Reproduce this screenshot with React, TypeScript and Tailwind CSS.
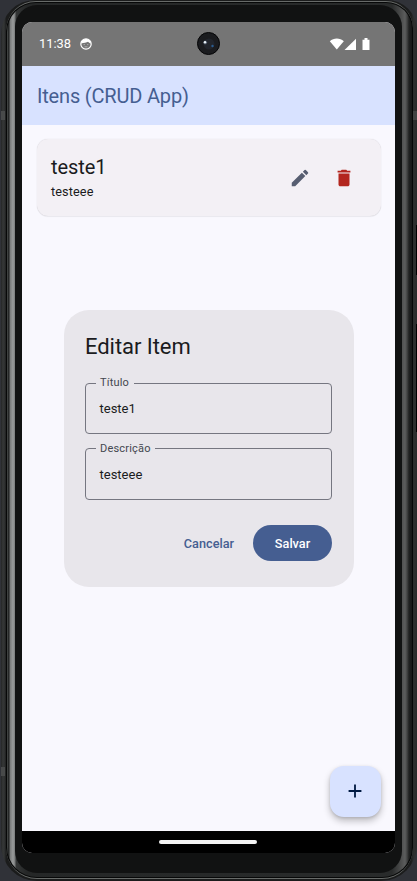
import type { ReactNode } from "react";

function StatusBar() {
  return (
    <div className="grid h-11 shrink-0 grid-cols-[1fr_23px_1fr] items-center bg-[#757575] pb-px text-white">
      <div className="flex items-center gap-2 pt-px pl-[17px]">
        <span className="w-[33px] pt-px text-[12.900px] leading-none whitespace-nowrap">11:38</span>
        <svg className="size-3" viewBox="0 0 12 12">
          <circle cx="6" cy="6" r="5.200" fill="none" stroke="#fff" strokeWidth="1.200" />
          <path d="M1 5.500C1.500 2 3.600 1 6 1s4.500 1 5 4.500C9.500 5.300 8.800 4.700 8 3.800 6.500 4.800 4 4.800 1 5.500Z" fill="#fff" />
          <path d="M3.600 6.600h1.300M7.100 6.600h1.300M4.500 8.800h3" stroke="#fff" strokeWidth=".7" opacity=".6" />
        </svg>
      </div>
      <div className="flex size-[23px] items-center justify-center rounded-full border-[1.5px] border-[#050506] bg-[#1b1c1f]">
        <svg className="size-5" viewBox="0 0 20 20">
          <circle cx="10" cy="10" r="5.500" fill="#22252c" />
          <circle cx="6.200" cy="8.400" r="2" fill="#46505f" />
          <circle cx="6" cy="8.300" r="1.200" fill="#edf5fa" />
          <circle cx="13.500" cy="12" r="1.200" fill="#2b5c91" />
        </svg>
      </div>
      <div className="flex justify-end pt-px pr-[25px]">
        <svg className="h-3 w-[41px]" viewBox="0 0 41 12" fill="#fff">
          <path d="M.8 3.200C4.600-.3 11-.3 14.800 3.200L7.800 11.500Z" />
          <path d="M15.500 12 27 .7V12Z" />
          <path d="M33.500 1.800h2V0h3v1.800h2V12h-7Z" />
        </svg>
      </div>
    </div>
  );
}

function Field({ label, value }: { label: string; value: string }) {
  return (
    <fieldset className="h-[58px] w-full rounded-[4px] border border-[#757680] px-[9.500px]">
      <legend className="h-[14px] px-[4.500px] text-[11px] leading-[14px] tracking-[0.200px] text-[#44464f]">{label}</legend>
      <div className="pt-[9px] pl-[4px] text-[13px] leading-[20px] text-[#1a1b20]">{value}</div>
    </fieldset>
  );
}

function ItemCard() {
  return (
    <div className="flex h-[77px] items-center rounded-[11px] bg-[#f3f0f5] pt-px pr-[25.500px] pl-[14.500px] shadow-[0_0_1px_rgba(0,0,0,0.18),0_1px_1px_rgba(0,0,0,0.05)]">
      <div className="flex-1 text-[#1a1b20]">
        <div className="text-[20px] leading-[25px] tracking-[-0.050px]">teste1</div>
        <div className="mt-[3px] text-[12.700px] leading-[18px] tracking-[0.100px]">testeee</div>
      </div>
      <div className="flex gap-[22px]">
        <svg className="size-[22px]" viewBox="0 0 24 24" fill="#575e71">
          <path d="M3 17.250V21h3.750L17.810 9.940l-3.750-3.750L3 17.250zM20.710 7.040a1 1 0 0 0 0-1.410l-2.340-2.340a1 1 0 0 0-1.410 0l-1.830 1.830 3.750 3.750 1.830-1.830z" />
        </svg>
        <svg className="size-[22px]" viewBox="0 0 24 24" fill="#b3261e">
          <path d="M6 19c0 1.100.9 2 2 2h8c1.100 0 2-.9 2-2V7H6v12zM19 4h-3.500l-1-1h-5l-1 1H5v2h14V4z" />
        </svg>
      </div>
    </div>
  );
}

function EditDialog() {
  return (
    <section className="flex h-[276.500px] w-[290px] flex-col rounded-[25px] bg-[#e8e6eb] px-[21.500px] pt-[21px]">
      <h2 className="h-[45px] text-[22px] leading-[31px] tracking-[-0.050px] text-[#1a1b20]">Editar Item</h2>
      <div className="flex flex-col gap-[7.500px]">
        <Field label="Título" value="teste1" />
        <Field label="Descrição" value="testeee" />
      </div>
      <div className="flex justify-end gap-[19px] pt-[25.500px] text-[12.700px] font-medium">
        <button className="text-[#455e91]">Cancelar</button>
        <button className="h-[36px] w-[79px] rounded-full bg-[#455e91] text-white">Salvar</button>
      </div>
    </section>
  );
}

function PhoneFrame({ children }: { children: ReactNode }) {
  return (
    <div className="relative h-[881px] w-[417px] overflow-hidden bg-[#303238] pl-px">
      <div className="h-[881px] rounded-[34px_30px_36px_36px] bg-[linear-gradient(90deg,#242626_0px,#363838_2px,#2c2e2e_4px,#1b1c1c_5px,#1b1c1c_410px,#303131_413px,#292a2a_100%)] p-[1px_4px_2px_5px]">
        <div className="h-full rounded-[30px_27px_31px_31px] border-y border-[#686b69] bg-[#070808] p-[1px_1px_1px]">
          <div className="h-full rounded-[29px_26px_30px_30px] bg-[linear-gradient(90deg,#4b4e4d_0px,#191b1b_2px,#777979_3px,#999b9b_6px,#777979_8px,#343636_9px,#252727_20px,#292b2b_385px,#484949_393px,#5c5d5d_398px,#434444_400px,#202121_402px,#171818_100%)] p-[2px_10px_4px_8px]">
            <div className="h-full rounded-[22px] bg-[#111212] p-[17px_0_0_7px]">
              <div className="relative flex h-[831px] w-[373px] flex-col overflow-hidden rounded-[10px] bg-[#f9f8fe]">{children}</div>
            </div>
          </div>
        </div>
      </div>
      <div className="absolute inset-0 flex justify-between pl-px">
        <div className="flex flex-col gap-[647px] pt-[111px]">
          <div className="h-[9px] w-1 bg-[#484a4a]" />
          <div className="h-[9px] w-1 bg-[#484a4a]" />
        </div>
        <div className="flex flex-col items-end pt-[111px]">
          <div className="h-[9px] w-1 bg-[#424343]" />
          <div className="flex flex-col gap-[49px] pt-[105px]">
            <div className="h-[50px] w-px bg-black" />
            <div className="h-[108px] w-px bg-black" />
          </div>
        </div>
      </div>
    </div>
  );
}

export default function App() {
  return (
    <div className="font-[Roboto,sans-serif]">
      <PhoneFrame>
        <StatusBar />
        <header className="flex h-[58.500px] shrink-0 items-center bg-[#d8e2ff] pt-px pl-[15px] text-[20px] tracking-[-0.180px] text-[#455e91]">Itens (CRUD App)</header>
        <main className="flex min-h-0 flex-1 flex-col justify-between pt-[14.500px] pr-[14.500px] pb-[14.500px] pl-[14.500px]">
          <ItemCard />
          <button className="flex size-[51px] items-center justify-center self-end rounded-[14px] bg-[#d8e2ff] shadow-[0_4px_7px_rgba(0,0,0,0.24),0_1px_3px_rgba(0,0,0,0.12)]">
            <svg className="size-[22px]" viewBox="0 0 24 24" fill="#001a43">
              <path d="M19 13h-6v6h-2v-6H5v-2h6V5h2v6h6z" />
            </svg>
          </button>
        </main>
        <nav className="flex h-[22px] shrink-0 items-center justify-center bg-black pr-px">
          <div className="h-[4px] w-[98px] rounded-full bg-[#f5f5f5]" />
        </nav>
        <div className="absolute inset-0 flex items-center justify-center pt-[22px]">
          <EditDialog />
        </div>
      </PhoneFrame>
    </div>
  );
}
